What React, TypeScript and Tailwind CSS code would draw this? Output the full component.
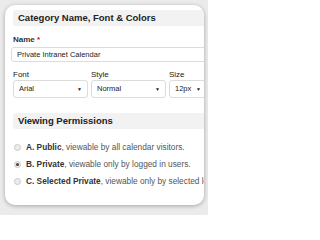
export default function App() {
  const selects = [
    { label: "Font", value: "Arial", w: "w-[75px]" },
    { label: "Style", value: "Normal", w: "w-[75px]" },
    { label: "Size", value: "12px", w: "w-[38px]" },
  ];
  return (
    <div className="w-[208px] h-[215px] bg-[#ebebeb] p-[5px] font-['Liberation_Sans',Arial,sans-serif] text-[#222]">
      <div className="w-[199px] h-[200px] bg-white rounded-[10px] shadow-[0_1px_4px_rgba(0,0,0,0.3)] overflow-hidden pl-[7px] pt-[5px]">
        <div className="w-[240px]">
          {/* Category section */}
          <div className="ml-[1px] h-[16px] bg-[#f2f2f2] rounded-l-[3px] pl-[5px] flex items-center text-[9.5px] font-bold leading-none">
            Category Name, Font &amp; Colors
          </div>

          <div className="mt-[10px] ml-[1px] text-[8px] font-bold leading-none text-[#333]">
            Name <span className="text-[#d00]">*</span>
          </div>
          <div className="mt-[3px] ml-[-1px] h-[15px] border border-[#dcdcdc] rounded-[3px] pl-[5px] flex items-center text-[7.5px] leading-none">
            Private Intranet Calendar
          </div>

          <div className="mt-[9px] flex gap-[3px] pl-[1px]">
            {selects.map((s) => (
              <div key={s.label} className={`${s.w} flex flex-col`}>
                <div className="text-[8px] leading-none text-[#222]">{s.label}</div>
                <div className="mt-[1px] h-[18px] border border-[#dcdcdc] rounded-[3px] px-[5px] flex items-center justify-between text-[7.5px] leading-none">
                  <span>{s.value}</span>
                  <span className="text-[5px]">▼</span>
                </div>
              </div>
            ))}
          </div>

          {/* Viewing permissions */}
          <div className="mt-[15px] ml-[1px] h-[16px] bg-[#f2f2f2] rounded-l-[3px] pl-[5px] flex items-center text-[9.5px] font-bold leading-none">
            Viewing Permissions
          </div>

          <div className="mt-[15px] flex flex-col gap-[10px] pl-[2px] text-[8.3px] leading-none text-[#555]">
            {[
              ["A. Public", ", viewable by all calendar visitors.", false],
              ["B. Private", ", viewable only by logged in users.", true],
              ["C. Selected Private", ", viewable only by selected logged in users.", false],
            ].map(([bold, rest, on]) => (
              <div key={bold as string} className="flex items-center h-[7px] whitespace-nowrap">
                <div className="w-[7px] h-[7px] shrink-0 rounded-full border border-[#c8c8c8] bg-[#ececec] flex items-center justify-center">
                  {on && <div className="w-[3px] h-[3px] rounded-full bg-[#444]" />}
                </div>
                <span className="ml-[5px]">
                  <b className="text-[#333]">{bold}</b>
                  {rest}
                </span>
              </div>
            ))}
          </div>
        </div>
      </div>
    </div>
  );
}
